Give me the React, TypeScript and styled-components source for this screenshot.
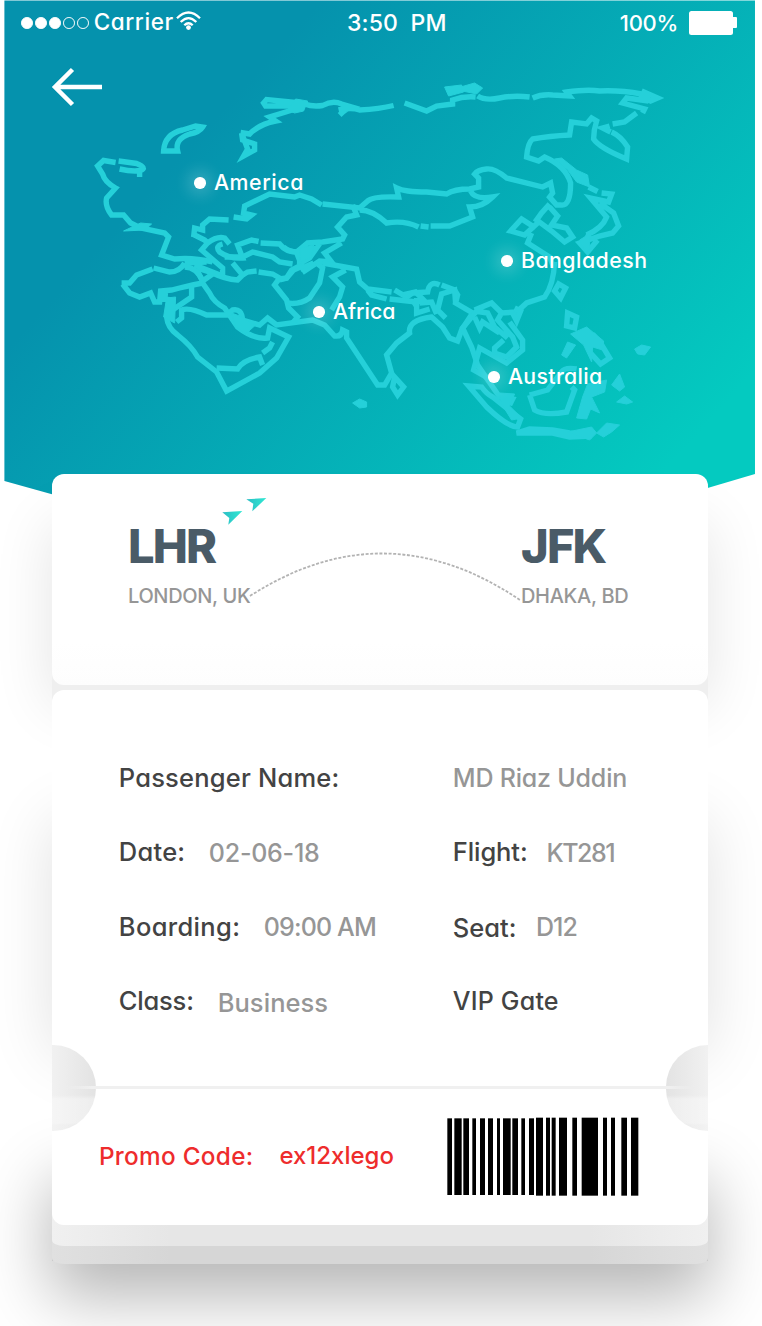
import React from 'react';
import styled, { createGlobalStyle } from 'styled-components';

const GlobalStyle = createGlobalStyle`
  *, *::before, *::after { box-sizing: border-box; }
  body {
    margin: 0;
    background: #fff;
    font-family: Inter, 'Open Sans', sans-serif;
    font-feature-settings: 'cv11' 1;
    font-weight: 500;
  }
`;

const Screen = styled.div`
  width: 762px;
  height: 1326px;
  overflow: hidden;
  background: #fff;
`;

const Hero = styled.header`
  position: relative;
  z-index: 1;
  width: 750.6px;
  height: 520px;
  margin-left: 4.4px;
  background: linear-gradient(132deg, #0592ad 26%, #04cac0 89%);
  clip-path: polygon(0 0.4px, 100% 0.4px, 100% 474px, 595px 520px, 140px 520px, 0 481px);
`;

const Label = styled.span<{ $size: number; $spacing?: number; $color?: string; $weight?: number }>`
  font-size: ${(p) => p.$size}px;
  line-height: 1.2;
  letter-spacing: ${(p) => p.$spacing ?? 0}px;
  color: ${(p) => p.$color ?? '#fff'};
  font-weight: ${(p) => p.$weight ?? 500};
  white-space: pre;
`;

const StatusBar = styled.div`
  display: grid;
  grid-template-columns: 325px 110px 1fr;
  align-items: center;
  height: 46px;
  padding: 0 18px 0 16.6px;
`;

const StatusGroup = styled.div<{ $end?: boolean }>`
  display: flex;
  align-items: center;
  justify-content: ${(p) => (p.$end ? 'flex-end' : 'flex-start')};
`;

const Clock = styled.div`
  padding: 2px 0 0 1px;
`;

const SignalDots = styled.div`
  display: flex;
  gap: 2.3px;
  margin-right: 4.5px;
`;

const Dot = styled.i<{ $filled?: boolean }>`
  width: 11.8px;
  height: 11.8px;
  border: 1px solid #fff;
  border-radius: 50%;
  background: ${(p) => (p.$filled ? '#fff' : 'transparent')};
`;

const Carrier = styled.div`
  display: flex;
  align-items: center;
  gap: 2px;
  margin-top: -3px;

  svg {
    margin-top: -1px;
  }
`;

const Battery = styled.div`
  display: flex;
  align-items: center;
  margin-left: 11px;

  &::before {
    content: '';
    width: 44px;
    height: 24px;
    border-radius: 2.5px;
    background: #fff;
  }

  &::after {
    content: '';
    width: 4px;
    height: 11px;
    border-radius: 0 1px 1px 0;
    background: #fff;
  }
`;

const BackButton = styled.button`
  display: block;
  margin: 21px 0 0 47px;
  padding: 0;
  border: 0;
  background: none;
  line-height: 0;
`;

const MapArt = styled.svg`
  position: absolute;
  top: 0;
  left: 0;
  fill: none;
  stroke: #25d0d9;
  stroke-width: 5.4;
`;

const Pin = styled.div`
  position: absolute;
  display: flex;
  align-items: center;
  gap: 8px;

  &::before {
    content: '';
    flex: none;
    width: 11.5px;
    height: 11.5px;
    border-radius: 50%;
    background: #fff;
    box-shadow: 0 0 16px 6px rgba(255, 255, 255, 0.2);
  }
`;

const Ticket = styled.main`
  position: relative;
  isolation: isolate;
  z-index: 2;
  width: 655.5px;
  margin: -45.7px 0 0 52.3px;
`;

const Card = styled.section`
  position: relative;
  border-radius: 12px;
  background: #fff;
`;

const RouteCard = styled(Card)`
  display: flex;
  align-items: flex-start;
  height: 211px;
  padding: 44px 0 0 75.7px;
  background: linear-gradient(#fff 80%, #fdfdfd);

  &::before {
    content: '';
    position: absolute;
    inset: 50px 0 -20px;
    z-index: -1;
    background: #efefef;
    box-shadow: 0 0 56px rgba(0, 0, 0, 0.11);
  }
`;

const Airport = styled.div<{ $width: number }>`
  display: flex;
  flex-direction: column;
  gap: 9px;
  width: ${(p) => p.$width}px;
`;

const RouteArt = styled.svg`
  overflow: visible;
  margin-top: -28px;
`;

const DetailsCard = styled(Card)`
  margin-top: 5px;
  height: 535px;

  &::before {
    content: '';
    position: absolute;
    inset: 130px 0 170px;
    z-index: -1;
    box-shadow: 0 0 60px rgba(0, 0, 0, 0.12);
  }
`;

const Details = styled.div`
  display: grid;
  grid-template-columns: 334px 1fr;
  grid-auto-rows: 74.3px;
  height: 396px;
  padding: 51px 0 0 66.5px;
`;

const Field = styled.div`
  display: flex;
  align-items: center;
`;

const Value = styled(Label)<{ $gap?: number; $drop?: number }>`
  margin-left: ${(p) => p.$gap ?? 0}px;
  padding-top: ${(p) => p.$drop ?? 0}px;
`;

const Promo = styled.footer`
  display: flex;
  align-items: center;
  height: 140px;
  padding-left: 46.7px;
`;

const BarcodeArt = styled.svg`
  margin: 0 69px 0 auto;
`;

const Tear = styled.div`
  position: absolute;
  z-index: 2;
  top: 395.5px;
  left: 0;
  right: 0;
  height: 3px;
  background: linear-gradient(90deg, #f0f0f000 2%, #f0f0f0 6%, #f0f0f0 94%, #f0f0f000 98%);
`;

const Notch = styled.div<{ $side: 'left' | 'right' }>`
  position: absolute;
  z-index: 1;
  top: 355px;
  ${(p) => p.$side}: 0;
  width: ${(p) => (p.$side === 'left' ? 43.7 : 42)}px;
  height: 86px;
  border-radius: ${(p) => (p.$side === 'left' ? '0 43px 43px 0' : '43px 0 0 43px')};
  background:
    linear-gradient(transparent 50px, rgba(255, 255, 255, 0.36) 54px, rgba(255, 255, 255, 0.36) 78px, rgba(255, 255, 255, 0.15) 80px),
    linear-gradient(to ${(p) => p.$side}, #e3e3e3, #f1f1f1);
`;

const Layer = styled.div<{ $tone: string; $edge: string; $height: number }>`
  position: relative;
  z-index: -1;
  height: ${(p) => p.$height}px;
  margin-top: -12px;
  border-radius: 0 0 12px 12px / 0 0 6px 6px;
  background: linear-gradient(90deg, ${(p) => p.$edge}, ${(p) => p.$tone} 18%, ${(p) => p.$tone} 82%, ${(p) => p.$edge});
`;

const BackLayer = styled(Layer)`
  z-index: -2;
`;

const GroundShadow = styled.div`
  position: absolute;
  z-index: -3;
  left: 0;
  right: 0;
  top: 675px;
  height: 112px;
  background: #c9c9c9;
  box-shadow: 0 34px 66px 2px rgba(0, 0, 0, 0.29);
`;

const coast = [
  'M116 162.5L104 160.5L98 166L103 174Q105 182 116 188L107 198Q105 206 112 215H124L131 223L141 228L165 233L169 237L162 255L175 259Q193 257 213 262',
  'M119 161L137 163.5Q148 168 141 170.5Q133 172 120 169M140 172V177',
  'M164 151Q165 134 183 130L196 126L203 127Q200 132 190 134Q175 139 178 151Z',
  'M264 103L267 99.5L292 102L290 106L266 106Z',
  'M305 104Q313 107 323 105.5Q333 100 342 104L352 107Q346 109 340 115M339 110Q352 107 360 110Q380 109 394 105.5',
  'M296 109L270 117L276 121Q260 124 250 134L241 132.5M242 133L243 140L255 144V150L244 156L248 149Z',
  'M405 103L427 111L437 106L453 104V100Q464 96 476 97',
  'M478 96Q486 101 500 98T530 97M533 98Q542 94 553 95L570 96L567 92Q588 89 600 91Q620 90 642 94',
  'M642 91L658 98L651 101L640 95M649 101L627 98L623 103L645 109L643 113M637 113L625 122L613 124M610 126L603 128L611 132M612 132Q621 136 628 147L627 159Q600 148 594 139Q594 130 597 121L592 118L587 124L572 122L570 135Q550 136 533 139Q528 143 527 157L539 161L545 157Q566 166 571 183Q571 207 561 205H557L550 197L553 193L551 183L543 187L507 178Q495 168 487 169Q478 170 475 174L479 178V187L470 189Q455 189 447 194L427 192Q405 192 397 188L399 197Q373 196 368 201L360 208L323 204',
  'M360 210Q373 210 387 223Q405 220 419 227M421 226L429 227M431 226H450L473 217L470 207Q483 207 493 197Q475 200 471 191',
  'M322 205L312 199L300 195L295 197L270 194L245 206L244 213L252 215L247 219L234 217M229 220L210 219L203 225V230L195 228L194 237',
  'M193 234L205 240L208 243L202 250L223 268V275M208 243Q217 236 225 238L230 244M223 244Q215 246 220 252Q230 259 243 258L238 245L252 240L259 241.5M261 243L280 244Q287 253 300 252',
  'M225 257L243 257L253 252L273 257L280 262L293 264M233 263L243 275L238 280Q225 279 213 273L197 268M185 263L207 262M197 270L203 281L213 274M195 265L223 276',
  'M122 283H130L137 275L153 269M154 268L170 272Q180 272 185 263M185 267Q197 267 203 281M123 284L130 293L140 297L151 293L155 302H160L161 291L172 290L180 288L193 285L203 283M166 291L165 302',
  'M192 284V297L170 312M170 297L167 317Q168 328 178 335Q192 346 198 357L217 372L227 391L260 373L277 358L289 337L270 328L268 338Q255 340 238 327L225 308Q214 302 210 293L203 283',
  'M177 322L182 318V310Q190 307 207 315H227L233 310Q242 308 243 320L260 325L268 318L277 325L313 320L325 325L335 336Q342 337 343 330L347 332V338L378 385H385L392 373L387 355L397 343L410 333Q408 320 432 317L443 327L450 338L458 341L462 330L473 313L456 303L458 295L455 290L442 285M440 285Q430 280 428 292L413 293L407 297L395 290',
  'M217 368L238 369Q243 360 260 357L263 365M263 353L270 348L273 342M243 275L248 272L257 271M259 272L273 274L280 278L275 285L287 300L289 308L298 317L293 323M280 279L287 278L292 270L300 266',
  'M284 247Q290 252 297 252L308 243L323 242L343 239L345 235L338 227L347 217L357 215L353 205M342 243L325 253L332 262L320 261L305 271L300 263V255L317 248L310 258L303 262M296 250L303 268L314 263',
  'M280 280L287 278L294 270L303 266M317 263L323 268L320 283L310 298Q300 305 287 303M323 263L357 269L360 282L368 289L392 292M346 270L333 277L343 287L340 297L332 310M368 290L372 295L387 299M390 299L417 302',
  'M417 298V313L430 309M420 303L432 302L437 314M456 303L455 290L442 294L438 310L446 318M403 295L416 292L423 299L413 305',
  'M395 377L393 387L398 395L404 387Z',
  'M555 262Q554 285 545 297L527 303L517 312L502 313L492 303L475 310M477 311L463 328L472 347L478 365L500 397L513 399L510 405M475 311L488 313L495 327L508 338M504 340L495 348V353L507 357L517 347L513 337L498 320L502 313',
  'M510 322L523 340V350L507 363L480 348L474 370L490 379M513 313L517 321L521 311L515 308M475 317L480 328L483 322L500 333',
  'M559 284L555 291L561 298L566 288Z',
  'M469 386L482 387Q487 394 493 397L508 409L521 419L518 427Q508 427 487 407Z',
  'M517 433L530 429L553 430L570 433L592 436L570 437L553 433Z',
  'M530 395L535 410Q545 416 567 412L575 390L572 387M530 395L548 390L562 372Q565 367 577 369',
  'M568 313L577 317L575 328L567 326Z',
  'M593 334L601 343L610 358L601 364L590 352',
  'M589 187L598 191.5M602 193L612 194L609 202L591 198L607 217Q603 228 587 235M600 203L614 213L619 226L613 233L600 236L580 243L588 252L598 240M583 246L590 233',
  'M550 204L542 213L537 220L552 231L565 242L573 237L567 228L552 225L558 216L550 207M538 223L525 235L511 231L522 219L536 228M532 233L528 243L550 257L554 267',
];

const islands = [
  'M288 110L296 99L308 101L304 111L295 113Z',
  'M445 87L462 85L464 92L449 96Z', 'M461 87L475 83L483 88L477 94L463 91Z',
  'M353 403L360 399L367 402V407L360 408Z',
  'M555 159L562 158L577 170L588 175L590 187L577 182L568 170Z',
  'M568 342L576 345L567 358L562 355Z', 'M571 334L587 327L604 341L603 350L593 347L592 362L584 345Z',
  'M635 349L642 345L651 347L645 355L638 354Z', 'M612 385L620 374L625 387L620 391Z',
  'M617 402L625 396L633 402L627 404Z',
  'M607 380L605 392L592 397L600 413L591 409L587 419L577 418L583 397L588 384Z',
  'M568 432L592 427L597 433L590 440Z', 'M597 433L607 423L620 425L612 432L604 437Z',
  'M167 298L176 297L175 323L164 317Z', 'M232 313L240 316L256 325L246 334L236 327Z',
  'M300 248L314 245L312 257L301 262Z', 'M580 240L590 234L590 249L586 253Z',
  'M141 223L152 224L145 230L124 231Z', 'M500 393L515 394L510 406L522 418L512 420L502 404Z',
];

const pins = [
  { name: 'America', x: 190, y: 170, spacing: 0.6 },
  { name: 'Bangladesh', x: 497, y: 248, spacing: 0.5 },
  { name: 'Africa', x: 309, y: 299, spacing: 0 },
  { name: 'Australia', x: 484, y: 364, spacing: 0.35 },
];

const lowBars = [[82, 96], [103, 125], [130, 147], [157, 168], [180, 195], [204, 219], [231, 240], [249, 272], [277, 294], [304, 315], [327, 342]];
const tallBars = [[348, 369], [378, 390], [395, 407], [417, 441], [457, 471], [485, 534], [549, 561], [573, 585], [604, 621], [633, 655]];

const Wifi = () => (
  <svg width="25" height="20" viewBox="0 0 25 20" fill="none" stroke="#fff" strokeWidth="2.3">
    <path d="M1 7.200Q12.500 -4.300 24 7.200" />
    <path d="M4.700 11Q12.500 3.200 20.300 11" />
    <path d="M8.300 14.300Q12.500 10.200 16.700 14.300" />
    <circle cx="12.500" cy="16.600" r="2.400" fill="#fff" stroke="none" />
  </svg>
);

const ink = '#434343';
const muted = '#969696';
const slate = '#4a5b67';
const red = '#ee2c2c';

export default function App() {
  return (
    <Screen>
      <GlobalStyle />
      <Hero>
        <MapArt width="751" height="470" viewBox="4.4 0 751 470">
          {coast.map((d) => <path key={d} d={d} />)}
          {islands.map((d) => <path key={d} d={d} fill="#25d0d9" strokeWidth="1" />)}
        </MapArt>
        <StatusBar>
          <StatusGroup>
            <SignalDots>
              <Dot $filled /><Dot $filled /><Dot $filled /><Dot /><Dot />
            </SignalDots>
            <Carrier>
              <Label $size={22.5} $spacing={0.6}>Carrier</Label>
              <Wifi />
            </Carrier>
          </StatusGroup>
          <Clock><Label $size={23} $spacing={0.15}>3:50  PM</Label></Clock>
          <StatusGroup $end>
            <Label $size={22} $spacing={-0.3}>100%</Label>
            <Battery />
          </StatusGroup>
        </StatusBar>
        <BackButton aria-label="Back">
          <svg width="52" height="40" viewBox="0 0 52 40" fill="none" stroke="#fff" strokeWidth="4.500">
            <path d="M3.500 20H51M21.500 2.500L4 20L21.500 37.500" />
          </svg>
        </BackButton>
        {pins.map((pin) => (
          <Pin key={pin.name} style={{ left: pin.x, top: pin.y }}>
            <Label $size={21.3} $spacing={pin.spacing}>{pin.name}</Label>
          </Pin>
        ))}
      </Hero>

      <Ticket>
        <GroundShadow />
        <RouteCard>
          <Airport $width={122}>
            <Label $size={47} $weight={800} $spacing={-1.9} $color={slate}>LHR</Label>
            <Label $size={20} $spacing={-0.35} $color={muted}>LONDON, UK</Label>
          </Airport>
          <RouteArt width="271" height="114" viewBox="250 490 271 114" fill="none">
            <defs>
              <linearGradient id="plane" x1="0" y1="0" x2="1" y2="0">
                <stop offset="0" stopColor="#2cbcc4" />
                <stop offset="1" stopColor="#2fe9d3" />
              </linearGradient>
            </defs>
            <path d="M250 596Q385 509 520 600" stroke="#b3b3b3" strokeWidth="1.800" strokeDasharray="3 1.600" />
            <path d="M222.300 512.300L242.300 511L228.300 524.700L229.300 518Z" fill="url(#plane)" />
            <path d="M246.300 499.300L266.300 498L252.300 511.300L253.300 503.700Z" fill="url(#plane)" />
          </RouteArt>
          <Airport $width={130}>
            <Label $size={47} $weight={800} $spacing={-1.8} $color={slate}>JFK</Label>
            <Label $size={20} $spacing={-0.3} $color={muted}>DHAKA, BD</Label>
          </Airport>
        </RouteCard>

        <DetailsCard>
          <Details>
            <Field><Label $size={25.5} $spacing={0.2} $color={ink}>Passenger Name:</Label></Field>
            <Field><Label $size={25} $spacing={-0.2} $color={muted}>MD Riaz Uddin</Label></Field>
            <Field>
              <Label $size={25.5} $spacing={0.25} $color={ink}>Date:</Label>
              <Value $size={25} $spacing={-0.25} $color={muted} $gap={23.5}>02-06-18</Value>
            </Field>
            <Field>
              <Label $size={25.5} $spacing={-0.1} $color={ink}>Flight:</Label>
              <Value $size={25} $spacing={-1.5} $color={muted} $gap={19}>KT281</Value>
            </Field>
            <Field>
              <Label $size={25.5} $spacing={0.35} $color={ink}>Boarding:</Label>
              <Value $size={25} $spacing={-0.85} $color={muted} $gap={23.5}>09:00 AM</Value>
            </Field>
            <Field>
              <Value $size={25.5} $spacing={0} $color={ink} $drop={2}>Seat:</Value>
              <Value $size={25} $spacing={-0.9} $color={muted} $gap={19.5}>D12</Value>
            </Field>
            <Field>
              <Label $size={25.5} $spacing={-0.2} $color={ink}>Class:</Label>
              <Value $size={25.5} $spacing={0.05} $color={muted} $gap={24} $drop={4}>Business</Value>
            </Field>
            <Field><Label $size={25} $spacing={0.2} $color={ink}>VIP Gate</Label></Field>
          </Details>
          <Tear />
          <Notch $side="left" />
          <Notch $side="right" />
          <Promo>
            <Label $size={24.3} $spacing={0.3} $color={red}>Promo Code:</Label>
            <Value $size={24} $color={red} $gap={26}>ex12xlego</Value>
            <BarcodeArt width="192" height="79" viewBox="81 261 576 237">
              {lowBars.map(([a, b]) => <rect key={a} x={a} y={265} width={b - a} height={230} />)}
              {tallBars.map(([a, b]) => <rect key={a} x={a} y={263} width={b - a} height={234} />)}
            </BarcodeArt>
          </Promo>
        </DetailsCard>
        <Layer $tone="#e6e6e6" $edge="#f0f0f0" $height={32.5} />
        <BackLayer $tone="#d6d6d6" $edge="#e0e0e0" $height={30} />
      </Ticket>
    </Screen>
  );
}
